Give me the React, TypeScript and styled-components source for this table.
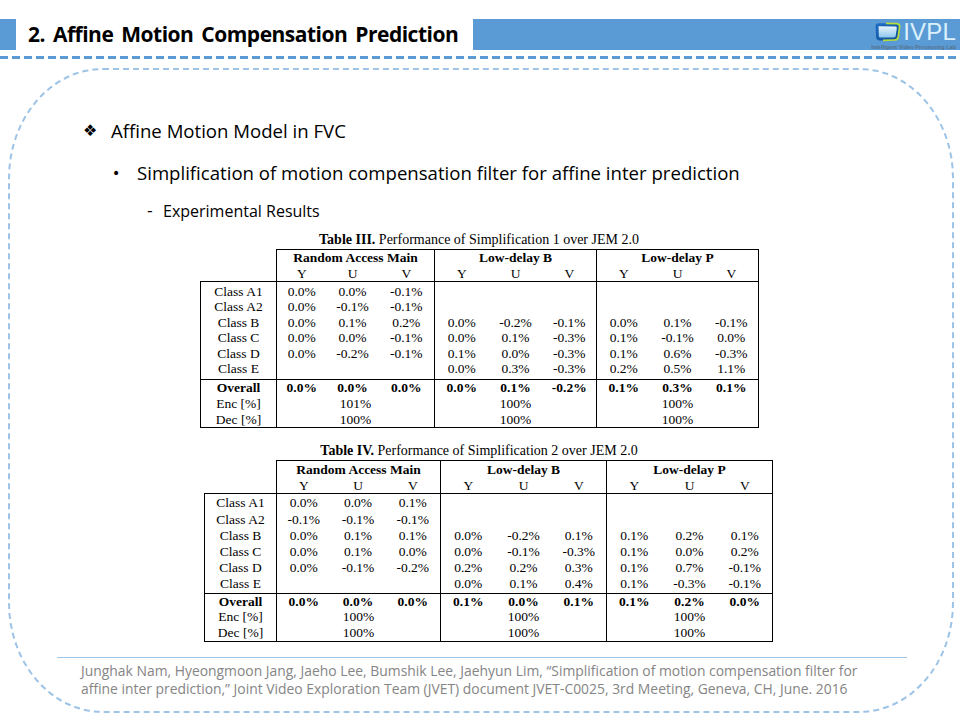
import React from "react";
import styled, { createGlobalStyle } from "styled-components";

const GlobalStyle = createGlobalStyle`
  html, body { margin: 0; padding: 0; background: #ffffff; }
  body { font-family: "Open Sans", "Noto Sans", sans-serif; color: #000; }
`;

const Slide = styled.div`
  width: 960px;
  height: 720px;
  overflow: hidden;
  background: #fff;
`;

/* ---------- header ---------- */
const Header = styled.header`
  display: flex;
  height: 31px;
  margin-top: 19px;
`;
const HeaderTab = styled.div`
  width: 16px;
  background: #5b9bd5;
`;
const Title = styled.h1`
  margin: 0;
  width: 457px;
  box-sizing: border-box;
  padding-left: 12px;
  font: 700 21px/31px "Open Sans", sans-serif;
  letter-spacing: -0.5px;
  word-spacing: 3px;
  color: #000;
  white-space: nowrap;
  overflow: hidden;
`;
const HeaderBar = styled.div`
  flex: 1;
  background: #5b9bd5;
  display: flex;
  justify-content: flex-end;
  padding: 1px 4px 0 0;
`;
const Logo = styled.div`
  display: flex;
  flex-direction: column;
  align-items: flex-end;
`;
const LogoTop = styled.div`
  display: flex;
  align-items: center;
  gap: 2px;
  height: 24px;
`;
const LogoText = styled.span`
  font: 400 24px/24px "Liberation Sans", sans-serif;
  color: #dcf0fc;
  letter-spacing: 0.2px;
`;
const LogoSub = styled.span`
  font: 700 5.5px/5px "Liberation Sans", sans-serif;
  color: #56728c;
  white-space: nowrap;
  margin-top: 1px;
`;
const HeaderRule = styled.div`
  height: 3px;
  margin-top: 6px;
  background: repeating-linear-gradient(90deg, #5b9bd5 0 8px, transparent 8px 12px);
`;

/* ---------- frame ---------- */
const Frame = styled.section`
  box-sizing: border-box;
  width: 946px;
  height: 645px;
  margin: 9px 0 0 8px;
  border: 2px dashed #9dc3e6;
  border-radius: 95px / 110px;
  padding-top: 49px;
`;

const Item = styled.div<{ $indent: number; $top: number; $size: number; $lh: number }>`
  display: flex;
  align-items: center;
  margin: ${(p) => p.$top}px 0 0 ${(p) => p.$indent}px;
  font-size: ${(p) => p.$size}px;
  line-height: ${(p) => p.$lh}px;
  color: #000;
  white-space: nowrap;
`;
const Marker = styled.span<{ $w: number; $size?: number }>`
  flex: none;
  width: ${(p) => p.$w}px;
  font-size: ${(p) => (p.$size ? `${p.$size}px` : "inherit")};
  font-family: "DejaVu Sans", "Open Sans", sans-serif;
`;

/* ---------- tables ---------- */
const Caption = styled.div<{ $top: number }>`
  margin-top: ${(p) => p.$top}px;
  text-align: center;
  font: 14px/14px "Liberation Serif", "Times New Roman", serif;
  color: #000;
  white-space: nowrap;
  padding-right: 4px;
  b { font-weight: 700; }
`;

const DataTable = styled.table<{ $left: number; $top: number }>`
  margin: ${(p) => p.$top}px 0 0 ${(p) => p.$left}px;
  border-collapse: collapse;
  table-layout: fixed;
  font: 13.5px "Liberation Serif", "Times New Roman", serif;
  color: #000;
`;

type CellProps = {
  $lh: number;
  $l?: boolean;
  $r?: boolean;
  $t?: boolean;
  $b?: boolean;
  $bold?: boolean;
  $pt?: number;
  $pb?: number;
};
const Cell = styled.td<CellProps>`
  padding: ${(p) => p.$pt ?? 0}px 0 ${(p) => p.$pb ?? 0}px 0;
  line-height: ${(p) => p.$lh}px;
  text-align: center;
  white-space: nowrap;
  vertical-align: top;
  font-weight: ${(p) => (p.$bold ? 700 : 400)};
  border-left: ${(p) => (p.$l ? "1px solid #000" : "none")};
  border-right: ${(p) => (p.$r ? "1px solid #000" : "none")};
  border-top: ${(p) => (p.$t ? "1px solid #000" : "none")};
  border-bottom: ${(p) => (p.$b ? "1px solid #000" : "none")};
`;

const FooterRule = styled.div`
  width: 850px;
  height: 1px;
  margin: 15px 0 0 47px;
  background: #9dc3e6;
`;
const Reference = styled.p`
  margin: 4px 0 0 71px;
  font: 400 13.9px/18px "Open Sans", sans-serif;
  color: #858585;
  white-space: nowrap;
`;

/* ---------- data ---------- */
type Triple = [string, string, string] | null;
type TableData = {
  caption: string;
  groups: string[];
  rows: { label: string; vals: Triple[] }[];
  overall: Triple[];
  enc: string[];
  dec: string[];
};

const t3: TableData = {
  caption: "Table III.",
  groups: ["Random Access Main", "Low-delay B", "Low-delay P"],
  rows: [
    { label: "Class A1", vals: [["0.0%", "0.0%", "-0.1%"], null, null] },
    { label: "Class A2", vals: [["0.0%", "-0.1%", "-0.1%"], null, null] },
    { label: "Class B", vals: [["0.0%", "0.1%", "0.2%"], ["0.0%", "-0.2%", "-0.1%"], ["0.0%", "0.1%", "-0.1%"]] },
    { label: "Class C", vals: [["0.0%", "0.0%", "-0.1%"], ["0.0%", "0.1%", "-0.3%"], ["0.1%", "-0.1%", "0.0%"]] },
    { label: "Class D", vals: [["0.0%", "-0.2%", "-0.1%"], ["0.1%", "0.0%", "-0.3%"], ["0.1%", "0.6%", "-0.3%"]] },
    { label: "Class E", vals: [null, ["0.0%", "0.3%", "-0.3%"], ["0.2%", "0.5%", "1.1%"]] },
  ],
  overall: [["0.0%", "0.0%", "0.0%"], ["0.0%", "0.1%", "-0.2%"], ["0.1%", "0.3%", "0.1%"]],
  enc: ["101%", "100%", "100%"],
  dec: ["100%", "100%", "100%"],
};

const t4: TableData = {
  caption: "Table IV.",
  groups: ["Random Access Main", "Low-delay B", "Low-delay P"],
  rows: [
    { label: "Class A1", vals: [["0.0%", "0.0%", "0.1%"], null, null] },
    { label: "Class A2", vals: [["-0.1%", "-0.1%", "-0.1%"], null, null] },
    { label: "Class B", vals: [["0.0%", "0.1%", "0.1%"], ["0.0%", "-0.2%", "0.1%"], ["0.1%", "0.2%", "0.1%"]] },
    { label: "Class C", vals: [["0.0%", "0.1%", "0.0%"], ["0.0%", "-0.1%", "-0.3%"], ["0.1%", "0.0%", "0.2%"]] },
    { label: "Class D", vals: [["0.0%", "-0.1%", "-0.2%"], ["0.2%", "0.2%", "0.3%"], ["0.1%", "0.7%", "-0.1%"]] },
    { label: "Class E", vals: [null, ["0.0%", "0.1%", "0.4%"], ["0.1%", "-0.3%", "-0.1%"]] },
  ],
  overall: [["0.0%", "0.0%", "0.0%"], ["0.1%", "0.0%", "0.1%"], ["0.1%", "0.2%", "0.0%"]],
  enc: ["100%", "100%", "100%"],
  dec: ["100%", "100%", "100%"],
};

type Metrics = {
  cols: number[];
  head1: number;
  head2: number;
  row: number;
  bodyTop: number;
  bodyBottom: number;
  foot: number;
};

function ResultTable({ data, m, left, top }: { data: TableData; m: Metrics; left: number; top: number }) {
  const n = data.rows.length;
  const valueCells = (vals: Triple[], extra: Partial<CellProps>, lh: number, keyBase: string) =>
    vals.flatMap((v, g) =>
      [0, 1, 2].map((i) => (
        <Cell
          key={`${keyBase}-${g}-${i}`}
          $lh={lh}
          $l={i === 0}
          $r={g === 2 && i === 2}
          {...extra}
        >
          {v ? v[i] : ""}
        </Cell>
      ))
    );
  const spanRow = (label: string, vals: string[], extra: Partial<CellProps>) => (
    <tr>
      <Cell $lh={m.foot} $l {...extra}>{label}</Cell>
      {vals.map((v, g) => (
        <Cell key={g} colSpan={3} $lh={m.foot} $l $r={g === 2} {...extra}>
          {v}
        </Cell>
      ))}
    </tr>
  );
  return (
    <DataTable $left={left} $top={top}>
      <colgroup>
        {m.cols.map((w, i) => (
          <col key={i} style={{ width: w }} />
        ))}
      </colgroup>
      <thead>
        <tr>
          <Cell as="th" rowSpan={2} $lh={m.head1} $b />
          {data.groups.map((g, i) => (
            <Cell as="th" key={g} colSpan={3} $lh={m.head1} $l $r={i === 2} $t $bold>
              {g}
            </Cell>
          ))}
        </tr>
        <tr>
          {data.groups.flatMap((g, gi) =>
            ["Y", "U", "V"].map((c, i) => (
              <Cell as="th" key={`${g}-${c}`} $lh={m.head2} $l={i === 0} $r={gi === 2 && i === 2} $b>
                {c}
              </Cell>
            ))
          )}
        </tr>
      </thead>
      <tbody>
        {data.rows.map((r, ri) => {
          const extra: Partial<CellProps> = {
            $pt: ri === 0 ? m.bodyTop : 0,
            $pb: ri === n - 1 ? m.bodyBottom : 0,
          };
          return (
            <tr key={r.label}>
              <Cell $lh={m.row} $l {...extra}>{r.label}</Cell>
              {valueCells(r.vals, extra, m.row, r.label)}
            </tr>
          );
        })}
      </tbody>
      <tfoot>
        <tr>
          <Cell $lh={m.foot} $l $t $bold>Overall</Cell>
          {valueCells(data.overall, { $t: true, $bold: true }, m.foot, "ov")}
        </tr>
        {spanRow("Enc [%]", data.enc, {})}
        {spanRow("Dec [%]", data.dec, { $b: true })}
      </tfoot>
    </DataTable>
  );
}

const m3: Metrics = {
  cols: [76, 50, 52, 56, 54, 54, 54, 54, 54, 54],
  head1: 16.5,
  head2: 14,
  row: 15.6,
  bodyTop: 2,
  bodyBottom: 2,
  foot: 15.8,
};
const m4: Metrics = {
  cols: [72, 54, 55, 55, 55, 56, 55, 55, 56, 55],
  head1: 17,
  head2: 15,
  row: 16.2,
  bodyTop: 1,
  bodyBottom: 0,
  foot: 15.8,
};

function IvplIcon() {
  return (
    <svg width="27" height="20" viewBox="0 0 27 20">
      <defs>
        <linearGradient id="tvBody" x1="0" y1="0" x2="1" y2="1">
          <stop offset="0" stopColor="#1f6fc4" />
          <stop offset="1" stopColor="#0b4a93" />
        </linearGradient>
        <linearGradient id="tvScreen" x1="0" y1="0" x2="0" y2="1">
          <stop offset="0" stopColor="#e9f5fd" />
          <stop offset="1" stopColor="#8cc6ec" />
        </linearGradient>
      </defs>
      <path d="M1.5 4 Q1.5 1.2 4.5 1.2 L23 1.6 Q26 2 25.6 5 L24.2 14.8 Q23.7 18 20.4 18 L5.6 18.4 Q2.4 18.4 2.1 15 Z" fill="url(#tvBody)" />
      <path d="M4.6 4.2 L21.8 4.6 Q23 4.8 22.8 6.2 L21.7 14 Q21.4 15.4 19.8 15.4 L6.4 15.6 Q4.9 15.6 4.8 14.2 Z" fill="url(#tvScreen)" />
      <path d="M12 1.4 L23 1.6 Q26 2 25.6 5 L24.2 14.8 Q23.7 18 20.4 18 L9 18.3" fill="none" stroke="#b6dc3c" strokeWidth="1.7" />
    </svg>
  );
}

export default function App() {
  return (
    <Slide>
      <GlobalStyle />
      <Header>
        <HeaderTab />
        <Title>2. Affine Motion Compensation Prediction</Title>
        <HeaderBar>
          <Logo>
            <LogoTop>
              <IvplIcon />
              <LogoText>IVPL</LogoText>
            </LogoTop>
            <LogoSub>Intelligent Video Processing Lab</LogoSub>
          </Logo>
        </HeaderBar>
      </Header>
      <HeaderRule />
      <Frame>
        <Item $indent={73} $top={0} $size={18.6} $lh={24}>
          <Marker $w={28} $size={16}>❖</Marker>
          Affine Motion Model in FVC
        </Item>
        <Item $indent={102} $top={18} $size={18.6} $lh={24}>
          <Marker $w={25} $size={14}>•</Marker>
          Simplification of motion compensation filter for affine inter prediction
        </Item>
        <Item $indent={137} $top={16} $size={16} $lh={20}>
          <Marker $w={16}>-</Marker>
          Experimental Results
        </Item>

        <Caption $top={12}>
          <b>{t3.caption}</b> Performance of Simplification 1 over JEM 2.0
        </Caption>
        <ResultTable data={t3} m={m3} left={190} top={2} />

        <Caption $top={16}>
          <b>{t4.caption}</b> Performance of Simplification 2 over JEM 2.0
        </Caption>
        <ResultTable data={t4} m={m4} left={194} top={2} />

        <FooterRule />
        <Reference>
          Junghak Nam, Hyeongmoon Jang, Jaeho Lee, Bumshik Lee, Jaehyun Lim, “Simplification of motion compensation filter for
          <br />
          affine inter prediction,” Joint Video Exploration Team (JVET) document JVET-C0025, 3rd Meeting, Geneva, CH, June. 2016
        </Reference>
      </Frame>
    </Slide>
  );
}
